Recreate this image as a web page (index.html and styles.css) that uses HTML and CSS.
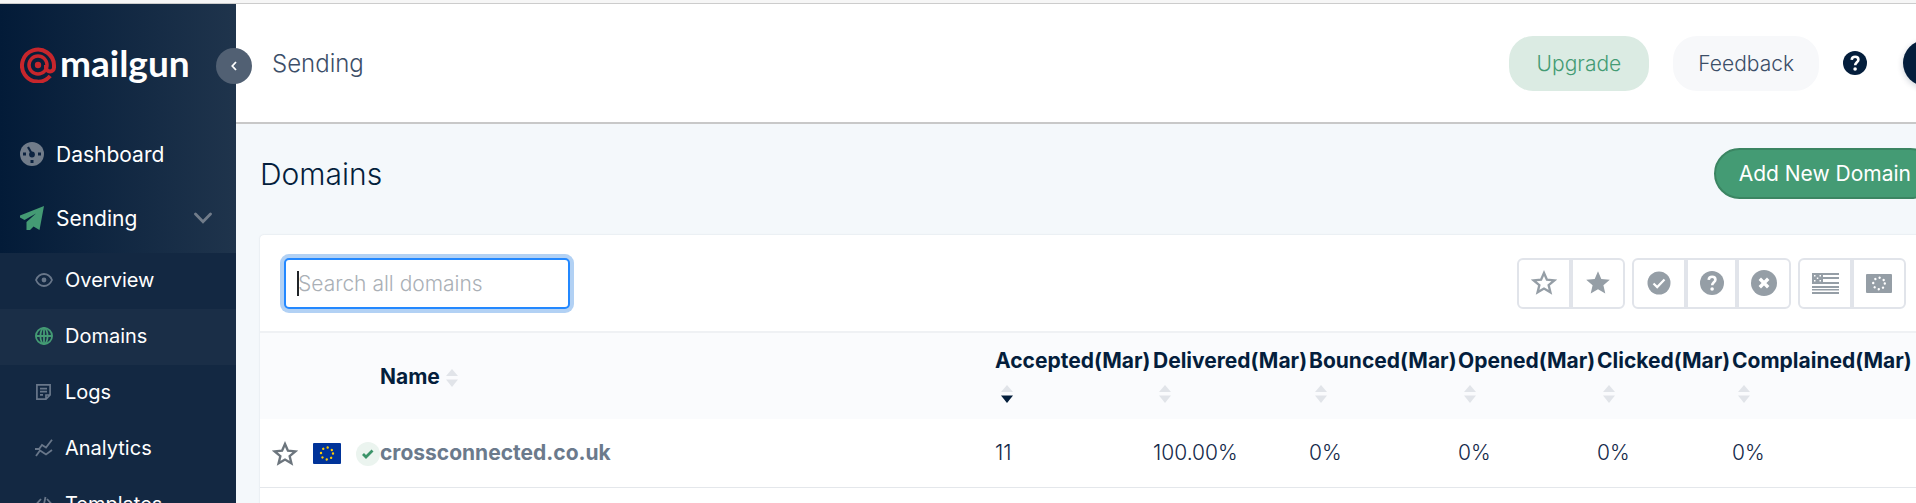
FILE: index.html
```html
<!DOCTYPE html>
<html lang="en">
<head>
<meta charset="utf-8">
<title>Domains - Mailgun</title>
<link rel="stylesheet" href="styles.css">
</head>
<body>
<svg class="defs" aria-hidden="true">
  <symbol id="star-outline" viewBox="0 0 24 24"><path d="M12 2.800l2.700 6.200 6.800.6-5.200 4.400 1.600 6.600-5.900-3.500-5.900 3.500 1.600-6.600L2.500 9.600l6.800-.6z" fill="none" stroke="currentColor" stroke-width="2.200"/></symbol>
  <symbol id="star-solid" viewBox="0 0 24 24"><path d="M12 .3l3.300 7.700 8.500.8-6.400 5.500 1.900 8.200L12 18.200l-7.300 4.300 1.900-8.200L.2 8.800 8.700 8z" fill="currentColor"/></symbol>
  <symbol id="help" viewBox="0 0 24 24"><circle cx="12" cy="12" r="12" fill="currentColor"/><path d="M8.700 8.800c.2-2 1.500-3 3.400-3s3.300 1.200 3.300 2.900c0 2.500-3.200 2.700-3.200 5.500" fill="none" stroke="#fff" stroke-width="2.600"/><circle cx="12.100" cy="18" r="1.800" fill="#fff"/></symbol>
  <symbol id="sort" viewBox="0 0 12 18"><path class="sort-up" d="M6 0l6 7H0z"/><path class="sort-down" d="M6 18l6-7.500H0z"/></symbol>
</svg>

<div class="top-strip"></div>
<div class="app">
  <nav class="sidebar" aria-label="Main">
    <div class="brand">
      <svg class="brand-mark" viewBox="0 0 36 36" aria-hidden="true" fill="none" stroke="#c7262c">
        <path d="M30.200 29A16 16 0 1 1 34 18v2.500a4 4 0 0 1-8 0V18" stroke-width="4"/>
        <circle cx="18" cy="18" r="9" stroke-width="3.500"/>
        <circle cx="18" cy="18" r="3.200" fill="#c7262c" stroke="none"/>
      </svg>
      <span class="brand-name">mailgun</span>
      <button class="collapse" aria-label="Collapse menu">
        <svg viewBox="0 0 6 10" width="6" height="10"><path d="M5 1L1.300 5 5 9" fill="none" stroke="#fff" stroke-width="1.800"/></svg>
      </button>
    </div>
    <a class="nav-item" href="#">
      <svg class="icon-24" viewBox="0 0 24 24"><circle cx="12" cy="12" r="12" fill="#717c8a"/><path d="M8 5l4 7" stroke="#0c2340" stroke-width="2.200"/><circle cx="12" cy="12.500" r="2.900" fill="#0c2340"/><path d="M3 10.500h3v3H3zM18 10.500h3v3h-3zM10.500 18h3v3h-3z" fill="#0c2340"/></svg>
      <span>Dashboard</span>
    </a>
    <a class="nav-item" href="#">
      <svg class="icon-24" viewBox="0 0 24 24"><path d="M24 0L19.500 24l-6-3.600L10 24H6.500v-8L16 7.500 4.500 14 0 11.500V9.500z" fill="#449b74"/></svg>
      <span>Sending</span>
      <svg class="chevron" viewBox="0 0 18 12"><path d="M1.500 2L9 9.800 16.500 2" fill="none" stroke="#717c8a" stroke-width="2.800" stroke-linecap="round"/></svg>
    </a>
    <div class="subnav">
      <a class="sub-item" href="#">
        <svg class="icon-18" viewBox="0 0 18 18"><path d="M1 9c3.500-8 12.500-8 16 0-3.500 8-12.500 8-16 0z" fill="none" stroke="#69778a" stroke-width="1.800"/><circle cx="9" cy="9" r="2.400" fill="#69778a"/></svg>
        <span>Overview</span>
      </a>
      <a class="sub-item active" href="#">
        <svg class="icon-18" viewBox="0 0 18 18" fill="none" stroke="#449b74" stroke-width="1.800"><circle cx="9" cy="9" r="8.100"/><ellipse cx="9" cy="9" rx="3.600" ry="8.100"/><path d="M1 9h16M9 1v16"/></svg>
        <span>Domains</span>
      </a>
      <a class="sub-item" href="#">
        <svg class="icon-18" viewBox="0 0 18 18" fill="none" stroke="#69778a" stroke-width="1.700"><path d="M1.900 1.900h13.200V12L11 16.100H1.900zM15 12h-4v4M5 5.600h7M5 8.700h7M5 11.800h3"/></svg>
        <span>Logs</span>
      </a>
      <a class="sub-item" href="#">
        <svg class="icon-18" viewBox="0 0 18 18" fill="none" stroke="#69778a" stroke-width="1.800"><path d="M0 10h4l3-4 4 2.500L17 .8M1 17l4-5.500 6 4 6-4.500"/></svg>
        <span>Analytics</span>
      </a>
      <a class="sub-item" href="#">
        <svg class="icon-18" viewBox="0 0 18 18" fill="none" stroke="#69778a" stroke-width="1.800"><path d="M6 4L1.500 9 6 14M12 4l4.500 5-4.500 5M10.500 2l-3 14"/></svg>
        <span>Templates</span>
      </a>
    </div>
  </nav>

  <div class="main">
    <header class="topbar">
      <span class="section">Sending</span>
      <button class="pill upgrade">Upgrade</button>
      <button class="pill feedback">Feedback</button>
      <button class="help" aria-label="Help"><svg class="icon-24"><use href="#help"/></svg></button>
      <button class="avatar" aria-label="Account">M</button>
    </header>

    <main class="content">
      <div class="title-row">
        <h1>Domains</h1>
        <button class="add">Add New Domain</button>
      </div>

      <section class="card">
        <div class="filters">
          <div class="search">
            <input type="text" placeholder="Search all domains" aria-label="Search all domains">
            <span class="caret"></span>
          </div>
          <div class="group">
            <button aria-label="Not starred"><svg class="icon-26"><use href="#star-outline"/></svg></button>
            <button aria-label="Starred"><svg class="icon-24"><use href="#star-solid"/></svg></button>
          </div>
          <div class="group three">
            <button aria-label="Verified"><svg class="icon-24" viewBox="0 0 24 24"><circle cx="12" cy="12" r="11.500" fill="currentColor"/><path d="M6.500 12.500l3.700 3.600L17.500 8.500" fill="none" stroke="#fff" stroke-width="2.200"/></svg></button>
            <button aria-label="Unverified"><svg class="icon-24"><use href="#help"/></svg></button>
            <button aria-label="Disabled"><svg class="icon-26" viewBox="0 0 26 26"><circle cx="13" cy="13" r="13" fill="currentColor"/><path d="M8.800 8.800l8.400 8.400M17.200 8.800l-8.400 8.400" stroke="#fff" stroke-width="3.400"/></svg></button>
          </div>
          <div class="group">
            <button aria-label="US region"><svg class="flag-us" viewBox="0 0 27 21"><path d="M0 0h27v2H0zM11 4h16v2H11zM11 9h16v2H11zM0 13h27v2H0zM0 16h27v1.500H0zM0 19h27v2H0zM0 0h11v11H0z" fill="currentColor"/><path d="M2 2h1.500v1.500H2zM7.500 2H9v1.500H7.500zM4.800 4.500h1.500V6H4.800zM2 7h1.500v1.500H2zM7.500 7H9v1.500H7.500z" fill="#fff"/></svg></button>
            <button aria-label="EU region"><svg class="flag-eu" viewBox="0 0 26 19"><rect width="26" height="19" rx="1" fill="currentColor"/><circle cx="13" cy="9.500" r="5.800" fill="none" stroke="#fff" stroke-width="2.400" stroke-linecap="round" stroke-dasharray="0.010 4.545"/></svg></button>
          </div>
        </div>

        <table>
          <colgroup><col class="c-lead"><col><col class="c-accepted"><col class="c-delivered"><col class="c-bounced"><col class="c-opened"><col class="c-clicked"><col class="c-complained"></colgroup>
          <thead>
            <tr>
              <th></th>
              <th>Name<svg class="sort"><use href="#sort"/></svg></th>
              <th>Accepted(Mar)<br><svg class="sort" viewBox="0 0 12 18"><path class="sort-up" d="M6 0l6 7H0z"/><path class="sort-on" d="M6 18l6-7.500H0z"/></svg></th>
              <th>Delivered(Mar)<br><svg class="sort"><use href="#sort"/></svg></th>
              <th>Bounced(Mar)<br><svg class="sort"><use href="#sort"/></svg></th>
              <th>Opened(Mar)<br><svg class="sort"><use href="#sort"/></svg></th>
              <th>Clicked(Mar)<br><svg class="sort"><use href="#sort"/></svg></th>
              <th>Complained(Mar)<br><svg class="sort"><use href="#sort"/></svg></th>
            </tr>
          </thead>
          <tbody>
            <tr>
              <td>
                <div class="lead">
                  <button class="row-star" aria-label="Star domain"><svg class="icon-26"><use href="#star-outline"/></svg></button>
                  <svg class="row-flag" viewBox="0 0 28 21"><rect width="28" height="21" rx="1" fill="#039"/><circle cx="14" cy="10.500" r="6" fill="none" stroke="#fc0" stroke-width="2.400" stroke-linecap="round" stroke-dasharray="0.010 4.702"/></svg>
                  <svg class="icon-24" viewBox="0 0 24 24"><circle cx="12" cy="12" r="12" fill="#ebf4ef"/><path d="M7 12l3 3 6.500-6.500" fill="none" stroke="#3b9469" stroke-width="2.800"/></svg>
                </div>
              </td>
              <td><a class="domain" href="#">crossconnected.co.uk</a></td>
              <td>11</td><td>100.00%</td><td>0%</td><td>0%</td><td>0%</td><td>0%</td>
            </tr>
          </tbody>
        </table>
      </section>
    </main>
  </div>
</div>
</body>
</html>
```
FILE: styles.css
```css
* { box-sizing: border-box; }

body {
  margin: 0;
  height: 100vh;
  overflow: hidden;
  display: flex;
  flex-direction: column;
  font-family: Inter, "Liberation Sans", sans-serif;
  font-size: 21px;
  font-weight: 300;
  color: #041e3c;
  background: #f4f8fb;
}

button, input { font: inherit; color: inherit; }
button {
  border: 0;
  padding: 0;
  background: none;
  display: flex;
  align-items: center;
  justify-content: center;
}
a { color: inherit; text-decoration: none; }
svg { display: block; flex: none; }

.defs { position: absolute; width: 0; height: 0; }
.icon-18 { width: 18px; height: 18px; }
.icon-24 { width: 24px; height: 24px; }
.icon-26 { width: 26px; height: 26px; }

.top-strip { flex: none; height: 4px; background: #f6f6f6; border-bottom: 1px solid #ccc; }
.app { flex: 1; min-height: 0; display: flex; }

/* Sidebar */
.sidebar {
  flex: none;
  width: 236px;
  background: linear-gradient(90deg, #031b38, #1f344c);
  color: #fff;
  font-weight: 400;
}
.brand {
  position: relative;
  height: 118px;
  display: flex;
  align-items: center;
  gap: 4px;
  padding-left: 20px;
}
.brand-mark { width: 36px; height: 36px; margin-top: 4px; }
.brand-name { font-family: Lato, Inter, sans-serif; font-size: 37px; font-weight: 700; line-height: 40px; }
.collapse {
  position: absolute;
  top: 44px;
  right: -16px;
  width: 36px;
  height: 36px;
  border-radius: 50%;
  background: #516073;
}
.nav-item { display: flex; align-items: center; gap: 12px; height: 64px; padding: 0 24px 0 20px; }
.chevron { width: 18px; height: 12px; margin-left: auto; }
.subnav { margin-top: 3px; background: #132842; }
.sub-item { display: flex; align-items: center; gap: 12px; height: 56px; padding: 0 0 2px 35px; font-size: 20px; }
.sub-item.active { background: #1a2e47; }

/* Header */
.main { flex: 1; min-width: 0; margin-right: -44px; }
.topbar {
  display: flex;
  align-items: center;
  height: 120px;
  padding: 0 11px 0 36px;
  background: #fff;
  border-bottom: 2px solid #c8c8c8;
}
.section { flex: 1; font-size: 24px; color: #3c4e68; }
.pill { height: 55px; padding: 0 25px; border-radius: 24px; margin-right: 24px; }
.upgrade { padding: 0 28px; background: #dbebe3; color: #449b74; }
.feedback { background: #f7f8fa; color: #3c4e68; }
.help { color: #041e3c; }
.avatar {
  width: 46px;
  height: 46px;
  margin-left: 36px;
  border-radius: 50%;
  background: #041e3c;
  color: #fff;
  box-shadow: 0 2px 6px #041e3c33;
}

/* Content */
.content { padding: 24px; }
.title-row { display: flex; align-items: center; justify-content: space-between; margin-bottom: 36px; }
h1 { margin: 0; font-size: 30px; font-weight: 300; }
.add {
  height: 51px;
  padding: 0 23px;
  border: 2px solid #3b8562;
  border-radius: 26px;
  background: #449b74;
  color: #fff;
  font-weight: 400;
}
.card { min-height: 400px; background: #fff; border-radius: 4px; box-shadow: 0 0 2px #041e3c22; }
.filters {
  display: flex;
  align-items: center;
  gap: 7px;
  height: 98px;
  padding: 0 30px 0 24px;
  border-bottom: 2px solid #eff1f4;
}
.search { position: relative; margin-right: auto; }
.search input {
  display: block;
  width: 286px;
  height: 51px;
  padding: 0 12px;
  border: 2px solid #2388ff;
  border-radius: 5px;
  background: #fff;
  box-shadow: 0 0 0 4px #b2d1f4;
  outline: 0;
}
.search input::placeholder { color: #aab0b6; opacity: 1; }
.caret { position: absolute; left: 13px; top: 13px; width: 2px; height: 25px; background: #212529; }

.group { display: flex; color: #959ea6; }
.group button { width: 54px; height: 51px; border: 2px solid #e1e4ea; background: #fff; }
.group.three button:nth-child(2) { width: 51px; }
.group button:first-child { border-radius: 6px 0 0 6px; }
.group button:last-child { border-radius: 0 6px 6px 0; }
.flag-us { width: 27px; height: 21px; }
.flag-eu { width: 26px; height: 19px; }

/* Domain table */
table { width: 100%; table-layout: fixed; border-collapse: collapse; }
.c-lead { width: 120px; }
.c-accepted { width: 158px; }
.c-delivered { width: 156px; }
.c-bounced { width: 149px; }
.c-opened { width: 139px; }
.c-clicked { width: 135px; }
.c-complained { width: 204px; }
thead { background: #fafbfd; }
th { height: 86px; padding: 1px 0 0; text-align: left; font-weight: 700; line-height: 32px; white-space: nowrap; }
.sort { display: inline-block; width: 12px; height: 18px; margin-left: 6px; vertical-align: -3px; }
.sort-up, .sort-down { fill: #e1e4e9; }
.sort-on { fill: #041e3c; }
td { height: 68px; padding: 0; border-bottom: 1px solid #e4e7eb; color: #14294a; }
.lead { display: flex; align-items: center; padding: 2px 0 0 12px; gap: 15px; }
.row-star { color: #6c757d; }
.row-flag { width: 28px; height: 21px; }
.domain { font-weight: 700; color: #6b7a8c; }
```
